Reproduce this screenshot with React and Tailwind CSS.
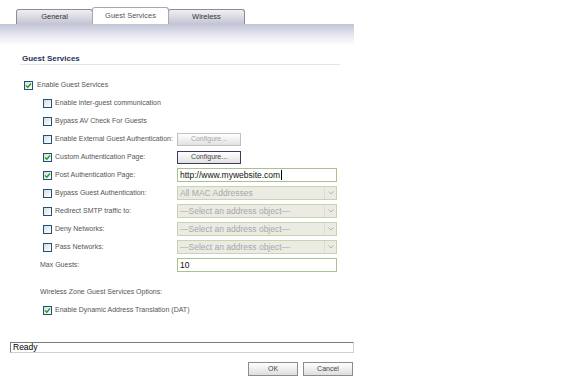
import React from 'react'

const font = "font-['Liberation_Sans',Arial,sans-serif]"

function Check({ checked }) {
  return (
    <span className="inline-flex w-[9px] h-[9px] shrink-0 border border-[#1c5180] bg-gradient-to-br from-[#dcdcd6] to-white items-center justify-center">
      {checked && (
        <svg width="7" height="7" viewBox="0 0 7 7">
          <path d="M1 3.5 L2.8 5.3 L6 1.5" fill="none" stroke="#21a121" strokeWidth="1.4" />
        </svg>
      )}
    </span>
  )
}

function Tab({ label, active }) {
  if (active) {
    return (
      <div className="w-[77px] h-[17px] bg-white border border-b-0 border-[#a8a8b0] rounded-t-[3px] flex items-center justify-center text-[7.5px] text-[#555] -mr-px relative z-10">
        {label}
      </div>
    )
  }
  return (
    <div className="w-[77px] h-[15px] bg-gradient-to-b from-[#f0f0f4] to-[#c3c5d3] border border-b-0 border-[#8c8c98] rounded-t-[3px] flex items-center justify-center text-[7.5px] text-[#333] -mr-px">
      {label}
    </div>
  )
}

function Button({ children, disabled, className }) {
  return (
    <div
      className={`h-[13px] flex items-center justify-center bg-gradient-to-b from-white to-[#e2e2e2] border text-[7px] ${
        disabled ? 'border-[#c0c0c0] text-[#a8a8a8]' : 'border-[#3c3c5a] text-[#444]'
      } ${className || ''}`}
    >
      {children}
    </div>
  )
}

function TextBox({ children }) {
  return (
    <div className="w-[160px] h-[14px] border border-[#a9c18f] bg-white flex items-center pl-[2px] text-[8.5px] text-[#111]">
      {children}
    </div>
  )
}

function SelectBox({ value }) {
  return (
    <div className="w-[160px] h-[14px] border border-[#c6d4b2] bg-[#ebebe4] flex items-center text-[8.5px] text-[#a8a8a8]">
      <span className="flex-1 pl-[2px] whitespace-nowrap overflow-hidden">{value}</span>
      <span className="w-[12px] h-full flex items-center justify-center border-l border-[#dcdcd4]">
        <svg width="6" height="4" viewBox="0 0 6 4">
          <path d="M0.5 0.5 L3 3 L5.5 0.5" fill="none" stroke="#b4b4b4" strokeWidth="1" />
        </svg>
      </span>
    </div>
  )
}

function SubRow({ checked, label, children }) {
  return (
    <div className="h-[18px] flex items-center">
      <span className="ml-[23px] mr-[3px] flex">
        <Check checked={checked} />
      </span>
      <span className="w-[122px] shrink-0 whitespace-nowrap">{label}</span>
      {children}
    </div>
  )
}

export default function App() {
  const addr = '\u2014Select an address object\u2014'
  return (
    <div className={`w-[576px] h-[391px] bg-white overflow-hidden text-[7px] text-[#555] ${font}`}>
      <div className="h-[24px] flex items-end pl-[16px]">
        <Tab label="General" />
        <Tab label="Guest Services" active />
        <Tab label="Wireless" />
      </div>
      <div className="w-[354px] h-[21px] bg-gradient-to-b from-[#c3c5d8] via-[#e4e5ee] to-white" />

      <div className="pl-[20px] w-[340px]">
        <div className="mt-[9px] h-[11px] border-b border-[#e4e4e4] pl-[2px] text-[8px] leading-[10px] font-bold text-[#1f365a]">
          Guest Services
        </div>

        <div className="mt-[11px]">
          <div className="h-[18px] flex items-center">
            <span className="ml-[4px] mr-[4px] flex">
              <Check checked />
            </span>
            <span>Enable Guest Services</span>
          </div>
          <SubRow label="Enable inter-guest communication" />
          <SubRow label="Bypass AV Check For Guests" />
          <SubRow label="Enable External Guest Authentication:">
            <Button disabled className="w-[64px]">Configure...</Button>
          </SubRow>
          <SubRow checked label="Custom Authentication Page:">
            <Button className="w-[64px]">Configure...</Button>
          </SubRow>
          <SubRow checked label="Post Authentication Page:">
            <TextBox>
              http://www.mywebsite.com
              <span className="inline-block w-px h-[10px] bg-black ml-px" />
            </TextBox>
          </SubRow>
          <SubRow label="Bypass Guest Authentication:">
            <SelectBox value="All MAC Addresses" />
          </SubRow>
          <SubRow label="Redirect SMTP traffic to:">
            <SelectBox value={addr} />
          </SubRow>
          <SubRow label="Deny Networks:">
            <SelectBox value={addr} />
          </SubRow>
          <SubRow label="Pass Networks:">
            <SelectBox value={addr} />
          </SubRow>
          <div className="h-[18px] flex items-center">
            <span className="ml-[20px] w-[137px] shrink-0">Max Guests:</span>
            <TextBox>10</TextBox>
          </div>

          <div className="mt-[9px] h-[18px] flex items-center">
            <span className="ml-[20px]">Wireless Zone Guest Services Options:</span>
          </div>
          <div className="h-[18px] flex items-center">
            <span className="ml-[23px] mr-[3px] flex">
              <Check checked />
            </span>
            <span>Enable Dynamic Address Translation (DAT)</span>
          </div>
        </div>
      </div>

      <div className="mt-[23px] ml-[10px] w-[344px] h-[11px] border border-t-[#7c7c7c] border-l-[#7c7c7c] border-r-[#d0d0d0] border-b-[#d0d0d0] flex items-center pl-[2px] text-[8.5px] leading-none text-black">
        Ready
      </div>

      <div className="mt-[9px] w-[353px] flex justify-end gap-[5px]">
        <div className="w-[50px] h-[14px] flex items-center justify-center bg-gradient-to-b from-white to-[#dedede] border border-[#8c8c8c] text-[7px] text-[#444]">
          OK
        </div>
        <div className="w-[50px] h-[14px] flex items-center justify-center bg-gradient-to-b from-white to-[#dedede] border border-[#8c8c8c] text-[7px] text-[#444]">
          Cancel
        </div>
      </div>
    </div>
  )
}
